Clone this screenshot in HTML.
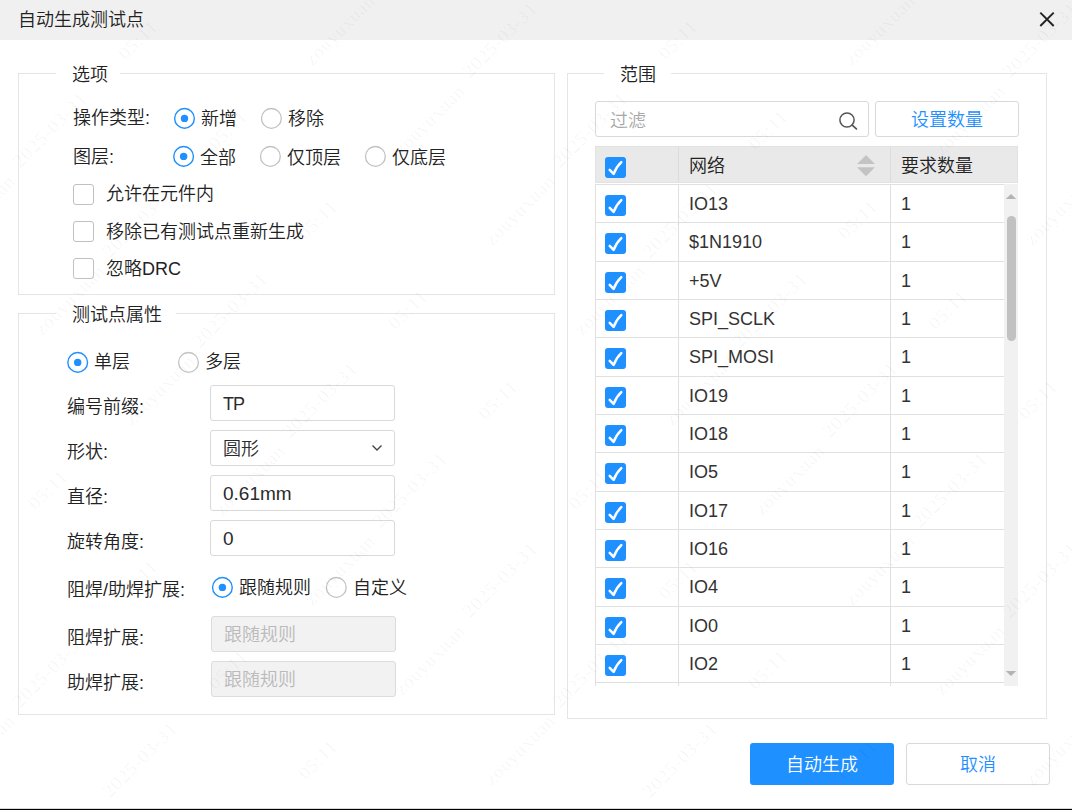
<!DOCTYPE html>
<html lang="zh-CN">
<head>
<meta charset="utf-8">
<title>自动生成测试点</title>
<style>
*{box-sizing:border-box;margin:0;padding:0}
html,body{width:1072px;height:810px;overflow:hidden;background:#fff}
body{position:relative;font-family:"Liberation Sans","Noto Sans CJK SC",sans-serif;font-size:18px;color:#222;line-height:24px;font-weight:350}
.abs{position:absolute}
.t{position:absolute;white-space:nowrap;height:24px;line-height:24px}
#hdr{left:0;top:0;width:1072px;height:40px;background:#f0f0f0}
.fs{position:absolute;border:1px solid #e5e5e5}
.lg{position:absolute;background:#fff;height:24px;line-height:24px;text-align:left;padding-left:16px;white-space:nowrap}
.radio{position:absolute;width:21px;height:21px;border-radius:50%;border:1.3px solid #c4c4c4;background:#fff}
.radio.on{border-color:#1e90ff}
.radio.on::after{content:"";position:absolute;left:50%;top:50%;width:8.4px;height:8.4px;margin:-4.2px 0 0 -4.2px;border-radius:50%;background:#1e90ff}
.cb{position:absolute;width:21px;height:21px;border:1.3px solid #c0c0c0;border-radius:3px;background:#fff}
.inp{position:absolute;left:210px;width:185px;height:36px;border:1px solid #d9d9d9;border-radius:3px;background:#fff;padding-left:12px;padding-top:1px;line-height:34px;white-space:nowrap;color:#2b2b2b}
.inp.dis{background:#f2f2f2;color:#bababa;border-color:#dcdcdc;left:211px;width:185px}
.btn{position:absolute;height:42px;border-radius:3px;text-align:center;line-height:44px;font-size:18px}
.row{position:absolute;left:0;width:409px;height:39px;border-top:1px solid #e0e0e0}
.chk{position:absolute;width:21px;height:21px;border-radius:3px;background:#1e90ff}
.chk::after{content:"";position:absolute;left:7px;top:3px;width:6px;height:11px;border:solid #fff;border-width:0 2.4px 2.4px 0;transform:rotate(40deg)}
#wm{position:absolute;left:0;top:0;width:1072px;height:810px;overflow:hidden;pointer-events:none}
#wm span{position:absolute;letter-spacing:.8px;font-family:"Liberation Serif",serif;font-size:19px;font-weight:400;color:rgba(0,0,0,.045);white-space:nowrap;line-height:20px;transform:translate(-50%,-50%) rotate(-45deg)}
</style>
</head>
<body>
<!-- header -->
<div class="abs" id="hdr"></div>
<div class="t" style="left:18px;top:8px;color:#222">自动生成测试点</div>
<svg class="abs" style="left:1038px;top:10px" width="18" height="18" viewBox="0 0 18 18"><path d="M2.3 2.6 L15.7 16 M15.7 2.6 L2.3 16" stroke="#222" stroke-width="1.9" fill="none"/></svg>

<!-- fieldset 1 -->
<div class="fs" style="left:18px;top:73px;width:537px;height:222px"></div>
<div class="lg" style="left:56px;top:63px;width:64px">选项</div>

<div class="t" style="left:73px;top:106px">操作类型:</div>
<svg class="abs" style="left:172px;top:106px" width="26" height="26" viewBox="0 0 26 26"><circle cx="12.5" cy="12.4" r="9.85" fill="#fff" stroke="#1e90ff" stroke-width="1.4"/><circle cx="12.5" cy="12.4" r="3.7" fill="#1e90ff"/></svg>
<div class="t" style="left:201px;top:107px">新增</div>
<svg class="abs" style="left:259px;top:106px" width="26" height="26" viewBox="0 0 26 26"><circle cx="12.4" cy="12.4" r="9.9" fill="#fff" stroke="#c2c2c2" stroke-width="1.3"/></svg>
<div class="t" style="left:288px;top:107px">移除</div>

<div class="t" style="left:73px;top:145px">图层:</div>
<svg class="abs" style="left:171px;top:144px" width="26" height="26" viewBox="0 0 26 26"><circle cx="12.6" cy="12.4" r="9.85" fill="#fff" stroke="#1e90ff" stroke-width="1.4"/><circle cx="12.6" cy="12.4" r="3.7" fill="#1e90ff"/></svg>
<div class="t" style="left:200px;top:146px">全部</div>
<svg class="abs" style="left:258px;top:144px" width="26" height="26" viewBox="0 0 26 26"><circle cx="12.4" cy="12.4" r="9.9" fill="#fff" stroke="#c2c2c2" stroke-width="1.3"/></svg>
<div class="t" style="left:287px;top:146px">仅顶层</div>
<svg class="abs" style="left:363px;top:144px" width="26" height="26" viewBox="0 0 26 26"><circle cx="12.4" cy="12.4" r="9.9" fill="#fff" stroke="#c2c2c2" stroke-width="1.3"/></svg>
<div class="t" style="left:392px;top:146px">仅底层</div>

<div class="cb" style="left:73px;top:184px"></div>
<div class="t" style="left:106px;top:182px">允许在元件内</div>
<div class="cb" style="left:73px;top:221px"></div>
<div class="t" style="left:106px;top:220px">移除已有测试点重新生成</div>
<div class="cb" style="left:73px;top:258px"></div>
<div class="t" style="left:106px;top:257px">忽略DRC</div>

<!-- fieldset 2 -->
<div class="fs" style="left:18px;top:313px;width:537px;height:402px"></div>
<div class="lg" style="left:56px;top:303px;width:120px">测试点属性</div>

<svg class="abs" style="left:65px;top:350px" width="26" height="26" viewBox="0 0 26 26"><circle cx="12.7" cy="12.4" r="9.85" fill="#fff" stroke="#1e90ff" stroke-width="1.4"/><circle cx="12.7" cy="12.4" r="3.7" fill="#1e90ff"/></svg>
<div class="t" style="left:94px;top:350px">单层</div>
<svg class="abs" style="left:176px;top:350px" width="26" height="26" viewBox="0 0 26 26"><circle cx="12.5" cy="12.4" r="9.9" fill="#fff" stroke="#c2c2c2" stroke-width="1.3"/></svg>
<div class="t" style="left:205px;top:350px">多层</div>

<div class="t" style="left:67px;top:395px">编号前缀:</div>
<div class="inp" style="top:385px;letter-spacing:-1px">TP</div>
<div class="t" style="left:67px;top:440px">形状:</div>
<div class="inp" style="top:430px">圆形</div>
<svg class="abs" style="left:370px;top:443px" width="14" height="10" viewBox="0 0 14 10"><path d="M2.5 2.5 L7 7 L11.5 2.5" stroke="#444" stroke-width="1.4" fill="none"/></svg>
<div class="t" style="left:67px;top:485px">直径:</div>
<div class="inp" style="top:475px;font-size:19px">0.61mm</div>
<div class="t" style="left:67px;top:530px">旋转角度:</div>
<div class="inp" style="top:520px;font-size:19px">0</div>

<div class="t" style="left:67px;top:578px">阻焊/助焊扩展:</div>
<svg class="abs" style="left:210px;top:575px" width="26" height="26" viewBox="0 0 26 26"><circle cx="12.4" cy="12.4" r="9.85" fill="#fff" stroke="#1e90ff" stroke-width="1.4"/><circle cx="12.4" cy="12.4" r="3.7" fill="#1e90ff"/></svg>
<div class="t" style="left:239px;top:576px">跟随规则</div>
<svg class="abs" style="left:324px;top:575px" width="26" height="26" viewBox="0 0 26 26"><circle cx="12.3" cy="12.4" r="9.9" fill="#fff" stroke="#c2c2c2" stroke-width="1.3"/></svg>
<div class="t" style="left:353px;top:576px">自定义</div>

<div class="t" style="left:67px;top:626px">阻焊扩展:</div>
<div class="inp dis" style="top:616px">跟随规则</div>
<div class="t" style="left:67px;top:671px">助焊扩展:</div>
<div class="inp dis" style="top:661px">跟随规则</div>

<!-- fieldset 3 -->
<div class="fs" style="left:567px;top:73px;width:480px;height:646px"></div>
<div class="lg" style="left:604px;top:63px;width:67px;padding-left:16px">范围</div>

<!--RIGHT-->
<!-- filter + button -->
<div class="abs" style="left:595px;top:101px;width:274px;height:36px;border:1px solid #d9d9d9;border-radius:3px;background:#fff"></div>
<div class="t" style="left:610px;top:109px;color:#a8a8a8">过滤</div>
<svg class="abs" style="left:836px;top:109px" width="24" height="24" viewBox="0 0 24 24"><circle cx="11" cy="11" r="7.1" stroke="#555" stroke-width="1.5" fill="none"/><path d="M16.2 16.1 L20.4 19.9" stroke="#555" stroke-width="1.7" stroke-linecap="round" fill="none"/></svg>
<div class="btn" style="left:875px;top:101px;width:144px;height:36px;line-height:37px;background:#fff;border:1px solid #d9d9d9;color:#1e90ff">设置数量</div>
<!-- table header -->
<div class="abs" style="left:595px;top:146px;width:423px;height:37px;background:#e9e9e9;border:1px solid #e2e2e2"></div>
<div class="abs" style="left:678px;top:147px;width:1px;height:35px;background:#dcdcdc"></div>
<div class="abs" style="left:890px;top:147px;width:1px;height:35px;background:#dcdcdc"></div>
<svg class="abs" style="left:605px;top:157px" width="21" height="21" viewBox="0 0 21 21"><rect width="21" height="21" rx="3" fill="#1e90ff"/><path d="M4.7 12.9 L8.6 16.9 Q11.6 9.6 16.3 5.2" stroke="#fff" stroke-width="2.5" stroke-linecap="round" stroke-linejoin="round" fill="none"/></svg>
<div class="t" style="left:689px;top:154px">网络</div>
<svg class="abs" style="left:856px;top:154px" width="20" height="24" viewBox="0 0 20 24"><path d="M10 1 L19 10 L1 10 Z M10 22.3 L19 13.3 L1 13.3 Z" fill="#c3c3c3"/></svg>
<div class="t" style="left:901px;top:154px">要求数量</div>
<!-- table body -->
<div class="abs" id="tb" style="color:#333;left:595px;top:184px;width:409px;height:502px;overflow:hidden;border-left:1px solid #e0e0e0">
<div class="row" style="top:0.0px"><svg class="abs" style="left:9px;top:10px" width="21" height="21" viewBox="0 0 21 21"><rect width="21" height="21" rx="3" fill="#1e90ff"/><path d="M4.7 12.9 L8.6 16.9 Q11.6 9.6 16.3 5.2" stroke="#fff" stroke-width="2.5" stroke-linecap="round" stroke-linejoin="round" fill="none"/></svg><div class="t" style="left:93px;top:7px">IO13</div><div class="t" style="left:305px;top:7px">1</div></div>
<div class="row" style="top:38.33px"><svg class="abs" style="left:9px;top:10px" width="21" height="21" viewBox="0 0 21 21"><rect width="21" height="21" rx="3" fill="#1e90ff"/><path d="M4.7 12.9 L8.6 16.9 Q11.6 9.6 16.3 5.2" stroke="#fff" stroke-width="2.5" stroke-linecap="round" stroke-linejoin="round" fill="none"/></svg><div class="t" style="left:93px;top:7px">$1N1910</div><div class="t" style="left:305px;top:7px">1</div></div>
<div class="row" style="top:76.67px"><svg class="abs" style="left:9px;top:10px" width="21" height="21" viewBox="0 0 21 21"><rect width="21" height="21" rx="3" fill="#1e90ff"/><path d="M4.7 12.9 L8.6 16.9 Q11.6 9.6 16.3 5.2" stroke="#fff" stroke-width="2.5" stroke-linecap="round" stroke-linejoin="round" fill="none"/></svg><div class="t" style="left:93px;top:7px">+5V</div><div class="t" style="left:305px;top:7px">1</div></div>
<div class="row" style="top:115.0px"><svg class="abs" style="left:9px;top:10px" width="21" height="21" viewBox="0 0 21 21"><rect width="21" height="21" rx="3" fill="#1e90ff"/><path d="M4.7 12.9 L8.6 16.9 Q11.6 9.6 16.3 5.2" stroke="#fff" stroke-width="2.5" stroke-linecap="round" stroke-linejoin="round" fill="none"/></svg><div class="t" style="left:93px;top:7px">SPI_SCLK</div><div class="t" style="left:305px;top:7px">1</div></div>
<div class="row" style="top:153.33px"><svg class="abs" style="left:9px;top:10px" width="21" height="21" viewBox="0 0 21 21"><rect width="21" height="21" rx="3" fill="#1e90ff"/><path d="M4.7 12.9 L8.6 16.9 Q11.6 9.6 16.3 5.2" stroke="#fff" stroke-width="2.5" stroke-linecap="round" stroke-linejoin="round" fill="none"/></svg><div class="t" style="left:93px;top:7px">SPI_MOSI</div><div class="t" style="left:305px;top:7px">1</div></div>
<div class="row" style="top:191.66px"><svg class="abs" style="left:9px;top:10px" width="21" height="21" viewBox="0 0 21 21"><rect width="21" height="21" rx="3" fill="#1e90ff"/><path d="M4.7 12.9 L8.6 16.9 Q11.6 9.6 16.3 5.2" stroke="#fff" stroke-width="2.5" stroke-linecap="round" stroke-linejoin="round" fill="none"/></svg><div class="t" style="left:93px;top:7px">IO19</div><div class="t" style="left:305px;top:7px">1</div></div>
<div class="row" style="top:230.0px"><svg class="abs" style="left:9px;top:10px" width="21" height="21" viewBox="0 0 21 21"><rect width="21" height="21" rx="3" fill="#1e90ff"/><path d="M4.7 12.9 L8.6 16.9 Q11.6 9.6 16.3 5.2" stroke="#fff" stroke-width="2.5" stroke-linecap="round" stroke-linejoin="round" fill="none"/></svg><div class="t" style="left:93px;top:7px">IO18</div><div class="t" style="left:305px;top:7px">1</div></div>
<div class="row" style="top:268.33px"><svg class="abs" style="left:9px;top:10px" width="21" height="21" viewBox="0 0 21 21"><rect width="21" height="21" rx="3" fill="#1e90ff"/><path d="M4.7 12.9 L8.6 16.9 Q11.6 9.6 16.3 5.2" stroke="#fff" stroke-width="2.5" stroke-linecap="round" stroke-linejoin="round" fill="none"/></svg><div class="t" style="left:93px;top:7px">IO5</div><div class="t" style="left:305px;top:7px">1</div></div>
<div class="row" style="top:306.66px"><svg class="abs" style="left:9px;top:10px" width="21" height="21" viewBox="0 0 21 21"><rect width="21" height="21" rx="3" fill="#1e90ff"/><path d="M4.7 12.9 L8.6 16.9 Q11.6 9.6 16.3 5.2" stroke="#fff" stroke-width="2.5" stroke-linecap="round" stroke-linejoin="round" fill="none"/></svg><div class="t" style="left:93px;top:7px">IO17</div><div class="t" style="left:305px;top:7px">1</div></div>
<div class="row" style="top:345.0px"><svg class="abs" style="left:9px;top:10px" width="21" height="21" viewBox="0 0 21 21"><rect width="21" height="21" rx="3" fill="#1e90ff"/><path d="M4.7 12.9 L8.6 16.9 Q11.6 9.6 16.3 5.2" stroke="#fff" stroke-width="2.5" stroke-linecap="round" stroke-linejoin="round" fill="none"/></svg><div class="t" style="left:93px;top:7px">IO16</div><div class="t" style="left:305px;top:7px">1</div></div>
<div class="row" style="top:383.33px"><svg class="abs" style="left:9px;top:10px" width="21" height="21" viewBox="0 0 21 21"><rect width="21" height="21" rx="3" fill="#1e90ff"/><path d="M4.7 12.9 L8.6 16.9 Q11.6 9.6 16.3 5.2" stroke="#fff" stroke-width="2.5" stroke-linecap="round" stroke-linejoin="round" fill="none"/></svg><div class="t" style="left:93px;top:7px">IO4</div><div class="t" style="left:305px;top:7px">1</div></div>
<div class="row" style="top:421.66px"><svg class="abs" style="left:9px;top:10px" width="21" height="21" viewBox="0 0 21 21"><rect width="21" height="21" rx="3" fill="#1e90ff"/><path d="M4.7 12.9 L8.6 16.9 Q11.6 9.6 16.3 5.2" stroke="#fff" stroke-width="2.5" stroke-linecap="round" stroke-linejoin="round" fill="none"/></svg><div class="t" style="left:93px;top:7px">IO0</div><div class="t" style="left:305px;top:7px">1</div></div>
<div class="row" style="top:460.0px"><svg class="abs" style="left:9px;top:10px" width="21" height="21" viewBox="0 0 21 21"><rect width="21" height="21" rx="3" fill="#1e90ff"/><path d="M4.7 12.9 L8.6 16.9 Q11.6 9.6 16.3 5.2" stroke="#fff" stroke-width="2.5" stroke-linecap="round" stroke-linejoin="round" fill="none"/></svg><div class="t" style="left:93px;top:7px">IO2</div><div class="t" style="left:305px;top:7px">1</div></div>
<div class="row" style="top:498.33px"></div>
<div class="abs" style="left:82px;top:0;width:1px;height:502px;background:#e0e0e0"></div>
<div class="abs" style="left:294px;top:0;width:1px;height:502px;background:#e0e0e0"></div>
</div>
<!-- scrollbar -->
<div class="abs" style="left:1004px;top:184px;width:14px;height:502px;background:#f1f1f1"></div>
<svg class="abs" style="left:1004px;top:190px" width="14" height="12" viewBox="0 0 14 12"><path d="M7 4 L12.2 9 L1.8 9 Z" fill="#b4b4b4"/></svg>
<div class="abs" style="left:1007px;top:216px;width:9px;height:125px;border-radius:4.5px;background:#c1c1c1"></div>
<svg class="abs" style="left:1004px;top:667px" width="14" height="12" viewBox="0 0 14 12"><path d="M7 9 L12.2 4 L1.8 4 Z" fill="#b4b4b4"/></svg>
<!--/RIGHT-->

<!-- footer buttons -->
<div class="btn" style="left:750px;top:743px;width:144px;background:#1e90ff;color:#fff">自动生成</div>
<div class="btn" style="left:906px;top:743px;width:144px;background:#fff;border:1px solid #d9d9d9;color:#1e90ff;line-height:42px">取消</div>
<div class="abs" style="left:0;top:808px;width:1072px;height:1px;background:#d8d8d8"></div><div class="abs" style="left:0;top:809px;width:1072px;height:1px;background:#000"></div>
<div id="wm"><span style="left:-40px;top:40px">2025-03-31</span><span style="left:138px;top:40px">05:11</span><span style="left:340px;top:30px">zouyuxuan</span><span style="left:500px;top:40px">2025-03-31</span><span style="left:678px;top:40px">05:11</span><span style="left:880px;top:30px">zouyuxuan</span><span style="left:1040px;top:40px">2025-03-31</span><span style="left:50px;top:130px">2025-03-31</span><span style="left:228px;top:130px">05:11</span><span style="left:430px;top:120px">zouyuxuan</span><span style="left:590px;top:130px">2025-03-31</span><span style="left:768px;top:130px">05:11</span><span style="left:970px;top:120px">zouyuxuan</span><span style="left:-20px;top:210px">zouyuxuan</span><span style="left:140px;top:220px">2025-03-31</span><span style="left:318px;top:220px">05:11</span><span style="left:520px;top:210px">zouyuxuan</span><span style="left:680px;top:220px">2025-03-31</span><span style="left:858px;top:220px">05:11</span><span style="left:1060px;top:210px">zouyuxuan</span><span style="left:70px;top:300px">zouyuxuan</span><span style="left:230px;top:310px">2025-03-31</span><span style="left:408px;top:310px">05:11</span><span style="left:610px;top:300px">zouyuxuan</span><span style="left:770px;top:310px">2025-03-31</span><span style="left:948px;top:310px">05:11</span><span style="left:-42px;top:400px">05:11</span><span style="left:160px;top:390px">zouyuxuan</span><span style="left:320px;top:400px">2025-03-31</span><span style="left:498px;top:400px">05:11</span><span style="left:700px;top:390px">zouyuxuan</span><span style="left:860px;top:400px">2025-03-31</span><span style="left:1038px;top:400px">05:11</span><span style="left:48px;top:490px">05:11</span><span style="left:250px;top:480px">zouyuxuan</span><span style="left:410px;top:490px">2025-03-31</span><span style="left:588px;top:490px">05:11</span><span style="left:790px;top:480px">zouyuxuan</span><span style="left:950px;top:490px">2025-03-31</span><span style="left:1128px;top:490px">05:11</span><span style="left:-40px;top:580px">2025-03-31</span><span style="left:138px;top:580px">05:11</span><span style="left:340px;top:570px">zouyuxuan</span><span style="left:500px;top:580px">2025-03-31</span><span style="left:678px;top:580px">05:11</span><span style="left:880px;top:570px">zouyuxuan</span><span style="left:1040px;top:580px">2025-03-31</span><span style="left:50px;top:670px">2025-03-31</span><span style="left:228px;top:670px">05:11</span><span style="left:430px;top:660px">zouyuxuan</span><span style="left:590px;top:670px">2025-03-31</span><span style="left:768px;top:670px">05:11</span><span style="left:970px;top:660px">zouyuxuan</span><span style="left:-20px;top:750px">zouyuxuan</span><span style="left:140px;top:760px">2025-03-31</span><span style="left:318px;top:760px">05:11</span><span style="left:520px;top:750px">zouyuxuan</span><span style="left:680px;top:760px">2025-03-31</span><span style="left:858px;top:760px">05:11</span><span style="left:1060px;top:750px">zouyuxuan</span><span style="left:70px;top:840px">zouyuxuan</span><span style="left:610px;top:840px">zouyuxuan</span></div>
</body>
</html>
